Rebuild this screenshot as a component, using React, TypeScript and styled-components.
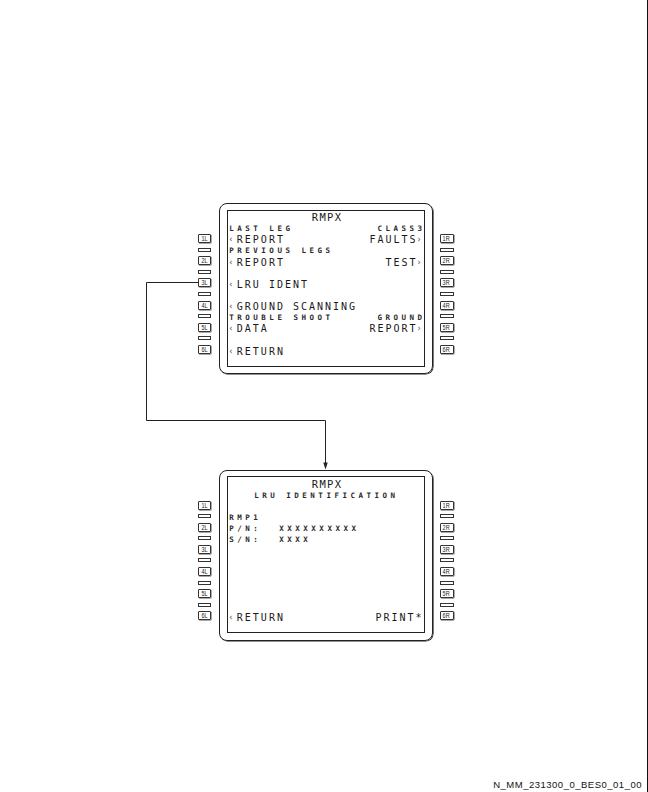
import React from 'react'
import { createGlobalStyle, styled } from 'styled-components'

const GlobalStyle = createGlobalStyle`
  body {
    margin: 0;
    background: #fff;
    font-family: 'DejaVu Sans Mono', monospace;
    color: #1a1a1a;
  }
`;

type Size = 'big' | 'small';
type Part = { text: string; size: Size; arrow?: boolean };
type Line = { left?: Part; right?: Part; center?: Part; value?: string };

const mainMenu: Line[] = [
  { center: { text: 'RMPX', size: 'big' } },
  { left: { text: 'LAST LEG', size: 'small' }, right: { text: 'CLASS3', size: 'small' } },
  { left: { text: 'REPORT', size: 'big', arrow: true }, right: { text: 'FAULTS', size: 'big', arrow: true } },
  { left: { text: 'PREVIOUS LEGS', size: 'small' } },
  { left: { text: 'REPORT', size: 'big', arrow: true }, right: { text: 'TEST', size: 'big', arrow: true } },
  {},
  { left: { text: 'LRU IDENT', size: 'big', arrow: true } },
  {},
  { left: { text: 'GROUND SCANNING', size: 'big', arrow: true } },
  { left: { text: 'TROUBLE SHOOT', size: 'small' }, right: { text: 'GROUND', size: 'small' } },
  { left: { text: 'DATA', size: 'big', arrow: true }, right: { text: 'REPORT', size: 'big', arrow: true } },
  {},
  { left: { text: 'RETURN', size: 'big', arrow: true } },
];

const identPage: Line[] = [
  { center: { text: 'RMPX', size: 'big' } },
  { center: { text: 'LRU IDENTIFICATION', size: 'small' } },
  {},
  { left: { text: 'RMP1', size: 'small' } },
  { left: { text: 'P/N:', size: 'small' }, value: 'XXXXXXXXXX' },
  { left: { text: 'S/N:', size: 'small' }, value: 'XXXX' },
  {},
  {},
  {},
  {},
  {},
  {},
  { left: { text: 'RETURN', size: 'big', arrow: true }, right: { text: 'PRINT*', size: 'big' } },
];

function Keys({ side }: { side: 'L' | 'R' }) {
  const items: React.ReactNode[] = [];
  for (let i = 1; i <= 6; i++) {
    items.push(<Key key={'k' + i}><KeyLabel>{i}{side}</KeyLabel></Key>);
    if (i < 6) items.push(<Spacer key={'s' + i} />);
  }
  return <KeyColumn $side={side}>{items}</KeyColumn>;
}

function Mcdu({ lines }: { lines: Line[] }) {
  return (
    <PanelRow>
      <Keys side='L' />
      <Frame>
        <Screen>
          {lines.map((line, i) => (
            <Row key={i} $center={!!line.center}>
              {line.center && (
                <Text $size={line.center.size} $title={i === 0}>{line.center.text}</Text>
              )}
              {line.left && (
                <Part>
                  {line.left.arrow && <Arrow>‹</Arrow>}
                  {line.value ? <Label>{line.left.text}</Label> : <Text $size={line.left.size}>{line.left.text}</Text>}
                  {line.value && <Text $size='small'>{line.value}</Text>}
                </Part>
              )}
              {line.right && (
                <Part $right $size={line.right.size}>
                  <Text $size={line.right.size}>{line.right.text}</Text>
                  {line.right.arrow && <Arrow $right>›</Arrow>}
                </Part>
              )}
            </Row>
          ))}
        </Screen>
      </Frame>
      <Keys side='R' />
    </PanelRow>
  );
}

export default function App() {
  return (
    <Page>
      <GlobalStyle />
      <Diagram>
        <Mcdu lines={mainMenu} />
        <Mcdu lines={identPage} />
      </Diagram>
      <Connector width='648' height='792' viewBox='0 0 648 792'>
        <polyline points='198,282.5 146.5,282.5 146.5,420.5 325.5,420.5 325.5,464' fill='none' stroke='#222' strokeWidth='1' />
        <polygon points='323.3,462.5 327.7,462.5 325.5,469.5' fill='#222' />
      </Connector>
      <Footer>N_MM_231300_0_BES0_01_00</Footer>
    </Page>
  );
}

/* Styled Components */
const Page = styled.div`
  position: relative;
  width: 648px;
  height: 792px;
  box-sizing: border-box;
  border-right: 1.5px solid #111;
  display: flex;
  flex-direction: column;
  overflow: hidden;
`;

const Diagram = styled.div`
  display: flex;
  flex-direction: column;
  gap: 95.5px;
  padding: 203px 0 0 198px;
`;

const PanelRow = styled.div`
  display: flex;
  align-items: flex-start;
`;

const KeyColumn = styled.div<{ $side: 'L' | 'R' }>`
  display: flex;
  flex-direction: column;
  gap: 4.6px;
  margin-top: 31px;
  width: ${p => (p.$side === 'L' ? '13px' : '14px')};
  margin-right: ${p => (p.$side === 'L' ? '8px' : '0')};
  margin-left: ${p => (p.$side === 'R' ? '6.5px' : '0')};
`;

const Key = styled.div`
  height: 9px;
  box-sizing: border-box;
  border: 1px solid #333;
  border-radius: 1px;
  box-shadow: 0.5px 0.5px 0 #555;
  display: flex;
  align-items: center;
  justify-content: center;
`;

const KeyLabel = styled.span`
  font-family: 'Liberation Sans', sans-serif;
  font-size: 6.5px;
  line-height: 7px;
  color: #222;
  transform: scaleX(0.85);
`;

const Spacer = styled.div`
  height: 4px;
  box-sizing: border-box;
  border: 1px solid #333;
`;

const Frame = styled.div`
  width: 214px;
  height: 171px;
  box-sizing: border-box;
  border: 1.3px solid #222;
  border-radius: 8px;
  box-shadow: 0.6px 0.6px 0 #222;
  padding: 5.5px 7.5px 5.5px 7.3px;
`;

const Screen = styled.div`
  height: 157px;
  box-sizing: border-box;
  border: 1px solid #222;
  padding: 1.5px 0 0 1px;
  display: grid;
  grid-template-columns: minmax(0, 1fr);
  grid-template-rows: repeat(13, 11.15px);
`;

const Row = styled.div<{ $center: boolean }>`
  display: flex;
  align-items: center;
  justify-content: ${p => (p.$center ? 'center' : 'space-between')};
  white-space: pre;
  font-size: 10px;
  line-height: 11px;
  min-width: 0;
`;

const Part = styled.span<{ $right?: boolean; $size?: Size }>`
  display: flex;
  align-items: center;
  font-size: 10px;
  line-height: 11px;
  margin-right: ${p => (p.$right && p.$size === 'small' ? '-2px' : '0')};
`;

const Text = styled.span<{ $size: Size; $title?: boolean }>`
  font-family: 'DejaVu Sans Mono', monospace;
  font-size: ${p => (p.$title ? '10.5px' : p.$size === 'big' ? '10px' : '7.5px')};
  font-weight: ${p => (p.$size === 'small' && !p.$title ? 700 : 400)};
  letter-spacing: ${p => (p.$title ? '1.3px' : p.$size === 'big' ? '2px' : '3.5px')};
  line-height: 11px;
  padding-left: ${p => (p.$title ? '1.3px' : '0')};
  color: ${p => (p.$size === 'small' && !p.$title ? '#2a2a2a' : '#1a1a1a')};
`;

const Label = styled.span`
  display: inline-block;
  width: 50px;
  font-size: 7.5px;
  font-weight: 700;
  letter-spacing: 3.5px;
  line-height: 11px;
  color: #2a2a2a;
`;

const Arrow = styled.span<{ $right?: boolean }>`
  display: inline-block;
  width: ${p => (p.$right ? '6px' : '7.5px')};
  font-family: 'DejaVu Sans', sans-serif;
  font-size: 8px;
  line-height: 11px;
  color: #444;
`;

const Connector = styled.svg`
  position: absolute;
  top: 0;
  left: 0;
  pointer-events: none;
`;

const Footer = styled.div`
  margin-top: auto;
  padding: 0 5px 1px 0;
  text-align: right;
  font-family: 'Liberation Sans', sans-serif;
  font-size: 9.5px;
  letter-spacing: 0.5px;
  line-height: 12px;
  color: #111;
`;
